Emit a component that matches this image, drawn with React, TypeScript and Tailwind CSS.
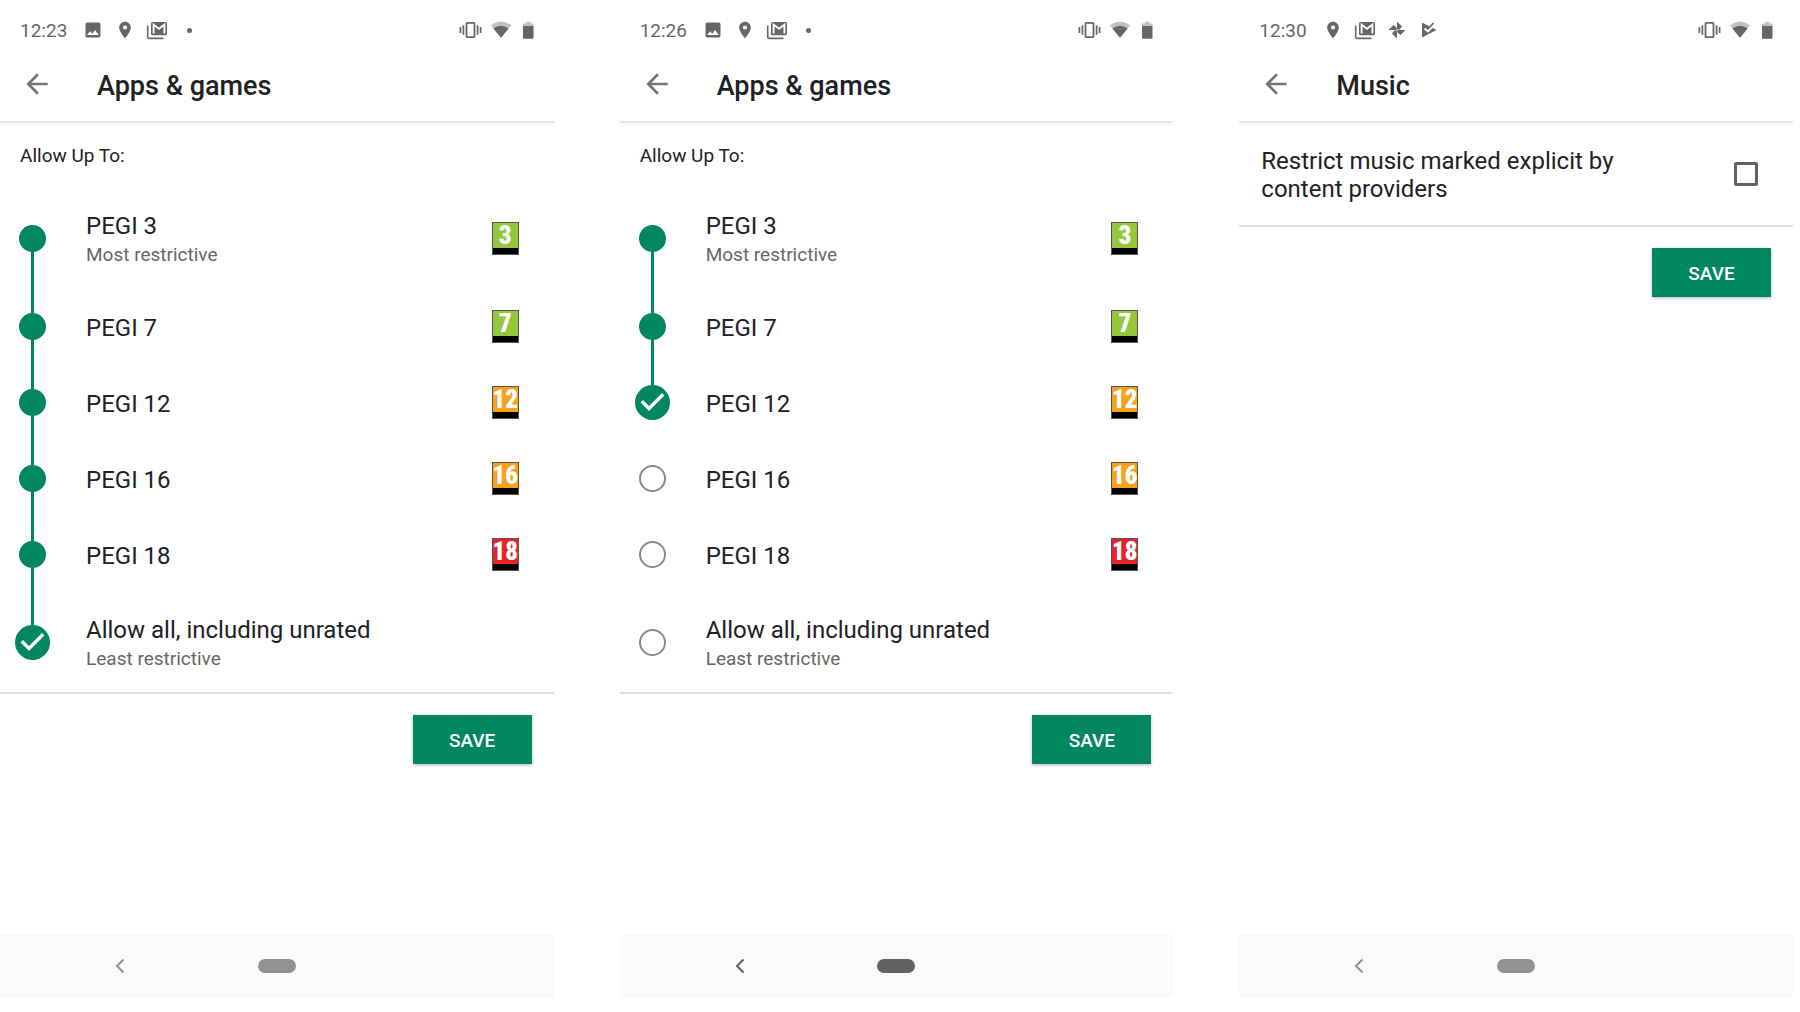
import { useState } from 'react'
import { MdArrowBack, MdImage, MdLocationOn } from 'react-icons/md'

interface Rating {
  id: string
  label: string
  hint?: string
  badge?: string
  color?: string
}

const RATINGS: Rating[] = [
  { id: 'pegi3', label: 'PEGI 3', hint: 'Most restrictive', badge: '3', color: 'bg-[#93c83d]' },
  { id: 'pegi7', label: 'PEGI 7', badge: '7', color: 'bg-[#93c83d]' },
  { id: 'pegi12', label: 'PEGI 12', badge: '12', color: 'bg-[#f9a11b]' },
  { id: 'pegi16', label: 'PEGI 16', badge: '16', color: 'bg-[#f9a11b]' },
  { id: 'pegi18', label: 'PEGI 18', badge: '18', color: 'bg-[#e8222a]' },
  { id: 'all', label: 'Allow all, including unrated', hint: 'Least restrictive' },
]

type StatusIcon = 'image' | 'pin' | 'gmail' | 'dot' | 'photos' | 'play'

function GmailStackIcon() {
  return (
    <svg width="24" height="24" viewBox="0 0 24 24" fill="none">
      <path d="M2.700 7.500V19Q2.700 20.400 4.200 20.400H18.500" stroke="currentColor" strokeWidth="1.600" />
      <rect x="6" y="4" width="16" height="13.200" rx="1.500" fill="currentColor" />
      <path d="M8.600 15.500V6.600L14 10.800L19.400 6.600V15.500" stroke="white" strokeWidth="1.900" />
    </svg>
  )
}

function PinwheelIcon() {
  return (
    <svg width="24" height="24" viewBox="0 0 24 24" fill="currentColor">
      <path d="M12 3.500L17 8.500L14.600 11.600H12Z" />
      <path d="M20.500 12L15.500 17L12.400 14.600V12Z" />
      <path d="M12 20.500L7 15.500L9.400 12.400H12Z" />
      <path d="M3.500 12L8.500 7L11.600 9.400V12Z" />
    </svg>
  )
}

function PlayCheckIcon() {
  return (
    <svg width="24" height="24" viewBox="0 0 24 24" fill="none">
      <path d="M5 4.500L19.500 12L5 19.500Z" fill="currentColor" />
      <path d="M7.500 10.500L11 13.500L18 6" stroke="white" strokeWidth="1.900" />
      <path d="M13 8.800L16.500 5" stroke="currentColor" strokeWidth="1.700" />
    </svg>
  )
}

function StatusGlyph({ icon }: { icon: StatusIcon }) {
  return (
    <span className="flex size-6 items-center justify-center">
      {icon === 'image' && <MdImage size={20} />}
      {icon === 'pin' && <MdLocationOn size={20} />}
      {icon === 'gmail' && <GmailStackIcon />}
      {icon === 'photos' && <PinwheelIcon />}
      {icon === 'play' && <PlayCheckIcon />}
      {icon === 'dot' && <span className="size-[5px] rounded-full bg-current" />}
    </span>
  )
}

function VibrateIcon() {
  return (
    <svg width="24" height="24" viewBox="0 0 24 24" fill="none" stroke="currentColor" strokeWidth="1.700">
      <rect x="8.500" y="4.800" width="8" height="14.400" rx="0.8" strokeWidth="1.800" />
      <path d="M5.400 7.200V16.800M19.600 7.200V16.800M2.400 9V15M22.600 9V15" />
    </svg>
  )
}

function WifiIcon() {
  return (
    <svg width="22" height="24" viewBox="0 0 22 24" fill="currentColor">
      <path d="M11 19.800L0.800 7.200Q11 0 21.200 7.200Z" opacity="0.4" />
      <path d="M11 19.800L3.400 10.400Q11 5 18.600 10.400Z" />
    </svg>
  )
}

function BatteryIcon() {
  return (
    <svg width="16" height="24" viewBox="0 0 16 24" fill="currentColor">
      <path d="M3 8V5.500H6V3.700H10.500V5.500H13.500V8Z" opacity="0.4" />
      <path d="M3 8H13.500V20Q13.500 20.800 12.700 20.800H3.800Q3 20.800 3 20Z" />
    </svg>
  )
}

function CheckMark() {
  return (
    <svg
      className="pointer-events-none absolute inset-0"
      width="35"
      height="35"
      viewBox="0 0 35 35"
      fill="none"
      stroke="currentColor"
      strokeWidth="3.400"
    >
      <path d="M6.800 16.300L14 23.500L28.200 9.300" />
    </svg>
  )
}

interface PhoneProps {
  time: string
  icons: StatusIcon[]
  title: string
  navTone: string
  children: React.ReactNode
}

function Phone({ time, icons, title, navTone, children }: PhoneProps) {
  return (
    <section className="flex min-w-0 flex-col">
      <div className="flex h-[46px] items-center justify-between pt-[14px] pr-[18px] pl-5 text-[#666]">
        <div className="flex items-center gap-[14px]">
          <span className="pt-0.5 text-[19px] leading-6">{time}</span>
          <div className="flex gap-2">
            {icons.map((icon) => (
              <StatusGlyph key={icon} icon={icon} />
            ))}
          </div>
        </div>
        <div className="flex gap-2">
          <VibrateIcon />
          <WifiIcon />
          <BatteryIcon />
        </div>
      </div>

      <header className="flex h-[77px] items-center gap-11 border-b-2 border-[#e4e4e4] pl-[21px] shadow-[0_4px_3px_-1px_rgba(0,0,0,0.04)]">
        <button type="button" aria-label="Back" className="text-[#757575]">
          <MdArrowBack size={32} />
        </button>
        <h1 className="pt-1 text-[27px] leading-8 font-medium">{title}</h1>
      </header>

      <div className="flex-1">{children}</div>

      <nav className={`grid h-16 grid-cols-[1fr_38px_1fr] items-center bg-[#fafafa] ${navTone}`}>
        <div className="flex justify-center pr-[18px]">
          <button type="button" aria-label="Previous screen">
            <svg width="16" height="16" viewBox="0 0 16 16" fill="none" stroke="currentColor" strokeWidth="2">
              <path d="M11.500 1.500L5 8L11.500 14.500" />
            </svg>
          </button>
        </div>
        <button type="button" aria-label="Home" className="h-[14px] rounded-full bg-current" />
      </nav>
    </section>
  )
}

function SaveBar() {
  return (
    <div className="flex justify-end border-t-2 border-[#dedede] pt-[21px] pr-[22px]">
      <button
        type="button"
        className="h-[49px] w-[119px] bg-[#00875f] pt-1 text-[19px] font-medium text-white shadow-[0_1px_3px_rgba(0,0,0,0.3)]"
      >
        SAVE
      </button>
    </div>
  )
}

function RatingBadge({ text, color }: { text: string; color?: string }) {
  return (
    <span className="flex h-[33px] w-[27px] flex-col border border-[#555] bg-black">
      <span
        className={`flex h-[25px] items-center justify-center pt-0.5 font-['Roboto_Condensed','Open_Sans_Condensed','Noto_Sans_Condensed',Roboto,sans-serif] text-[25px] leading-6 font-black text-white ${color}`}
      >
        {text}
      </span>
    </span>
  )
}

function RatingForm({ name, initial }: { name: string; initial: string }) {
  const [selected, setSelected] = useState(initial)
  const selectedIndex = RATINGS.findIndex((r) => r.id === selected)

  return (
    <form>
      <fieldset>
        <legend className="pt-[21px] pb-5 pl-5 text-[19px] leading-6">Allow Up To:</legend>
        {RATINGS.map((rating, i) => {
          const checked = i === selectedIndex
          const below = i < selectedIndex
          return (
            <label
              key={rating.id}
              className={`flex items-center gap-9 pr-[35px] pl-[15px] ${rating.hint ? 'h-[100px]' : 'h-[76px]'}`}
            >
              <span className="flex w-[35px] flex-col items-center self-stretch">
                <span className={`w-[3px] flex-1 ${i > 0 && i <= selectedIndex ? 'bg-[#00875f]' : ''}`} />
                <span className="relative flex text-white">
                  <input
                    type="radio"
                    name={name}
                    checked={checked}
                    onChange={() => setSelected(rating.id)}
                    className={`appearance-none rounded-full ${
                      checked
                        ? 'size-[35px] bg-[#00875f]'
                        : below
                          ? 'size-[27px] bg-[#00875f]'
                          : 'size-[27px] border-2 border-[#8a8a8a]'
                    }`}
                  />
                  {checked && <CheckMark />}
                </span>
                <span className={`w-[3px] flex-1 ${below ? 'bg-[#00875f]' : ''}`} />
              </span>
              <span className="flex-1 pt-1">
                <span className="block text-[24px] leading-[30px]">{rating.label}</span>
                {rating.hint && <span className="block text-[19px] leading-7 text-[#666]">{rating.hint}</span>}
              </span>
              {rating.badge && <RatingBadge text={rating.badge} color={rating.color} />}
            </label>
          )
        })}
      </fieldset>
      <SaveBar />
    </form>
  )
}

function MusicForm() {
  const [restricted, setRestricted] = useState(false)

  return (
    <form>
      <label className="flex h-[102px] items-center justify-between pr-[35px] pl-[22px]">
        <span className="max-w-[380px] pt-0.5 text-[24px] leading-7">
          Restrict music marked explicit by content providers
        </span>
        <input
          type="checkbox"
          checked={restricted}
          onChange={(e) => setRestricted(e.target.checked)}
          className="size-6 appearance-none rounded-xs border-[3px] border-[#5f6368] checked:bg-[#00875f]"
        />
      </label>
      <SaveBar />
    </form>
  )
}

export default function App() {
  return (
    <main className="grid min-h-screen grid-cols-3 gap-[66px] bg-white pr-[7px] pb-[14px] font-[Roboto,sans-serif] text-[#202124]">
      <Phone time="12:23" icons={['image', 'pin', 'gmail', 'dot']} title="Apps & games" navTone="text-[#919191]">
        <RatingForm name="rating-a" initial="all" />
      </Phone>
      <Phone time="12:26" icons={['image', 'pin', 'gmail', 'dot']} title="Apps & games" navTone="text-[#636363]">
        <RatingForm name="rating-b" initial="pegi12" />
      </Phone>
      <Phone time="12:30" icons={['pin', 'gmail', 'photos', 'play']} title="Music" navTone="text-[#919191]">
        <MusicForm />
      </Phone>
    </main>
  )
}
